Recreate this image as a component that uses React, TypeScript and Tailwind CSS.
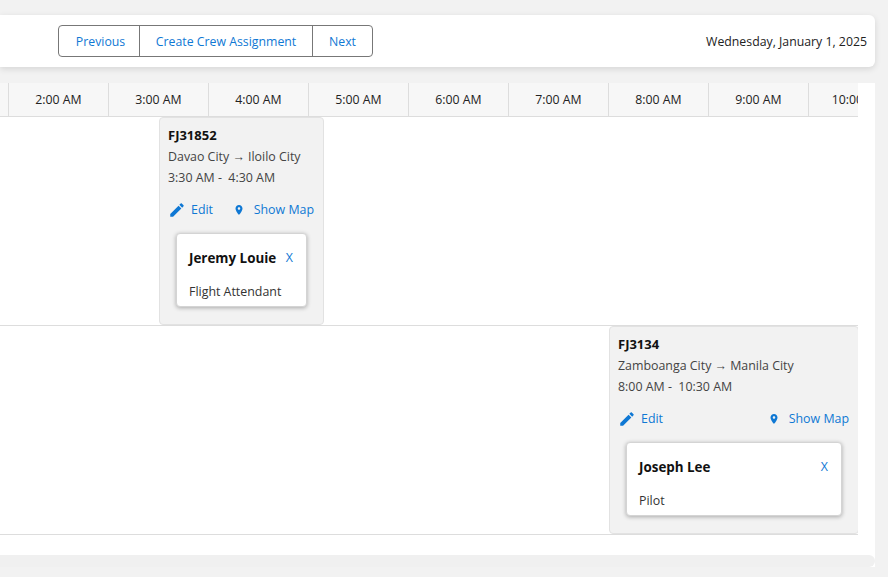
import React from 'react';

const hours = ['1:00 AM', '2:00 AM', '3:00 AM', '4:00 AM', '5:00 AM', '6:00 AM', '7:00 AM', '8:00 AM', '9:00 AM', '10:00 AM'];

type Flight = {
  code: string;
  route: string;
  time: string;
  crew: string;
  role: string;
  position: string;
};

const flights: Flight[] = [
  { code: 'FJ31852', route: 'Davao City → Iloilo City', time: '3:30 AM -  4:30 AM', crew: 'Jeremy Louie', role: 'Flight Attendant', position: 'left-[159px] w-[165px]' },
  { code: 'FJ3134', route: 'Zamboanga City → Manila City', time: '8:00 AM -  10:30 AM', crew: 'Joseph Lee', role: 'Pilot', position: 'left-[609px] w-[250px]' },
];

const EditIcon = () => (
  <svg viewBox="0 0 24 24" className="h-[18px] w-[18px] fill-[#0f78d4]">
    <path d="M3 17.25V21h3.75L17.81 9.94l-3.75-3.75L3 17.25zM20.71 7.04c.39-.39.39-1.02 0-1.41l-2.34-2.34c-.39-.39-1.02-.39-1.41 0l-1.83 1.83 3.75 3.75 1.83-1.83z" />
  </svg>
);

const PinIcon = () => (
  <svg viewBox="0 0 24 24" className="h-3 w-3 fill-[#0f78d4]">
    <path d="M12 2C8.13 2 5 5.13 5 9c0 5.25 7 13 7 13s7-7.75 7-13c0-3.87-3.13-7-7-7zm0 9.5c-1.38 0-2.5-1.12-2.5-2.5s1.12-2.5 2.5-2.5 2.5 1.12 2.5 2.5-1.12 2.5-2.5 2.5z" />
  </svg>
);

const FlightCard = ({ flight }: { flight: Flight }) => (
  <div className={`absolute top-0 h-[208px] rounded border border-[#e2e2e2] bg-[#f2f2f2] pl-2 pr-[9px] pt-[7px] ${flight.position}`}>
    <div className="text-[13px] leading-5 font-bold text-[#111]">{flight.code}</div>
    <div className="mt-[2px] text-[12.4px] leading-5 whitespace-pre text-[#444]">{flight.route}</div>
    <div className="mt-px text-[12.4px] leading-5 whitespace-pre text-[#444]">{flight.time}</div>
    <div className="mt-[12px] flex items-center justify-between text-[12.4px] leading-5 text-[#0f78d4]">
      <div className="flex items-center gap-[5px]">
        <EditIcon />
        <span>Edit</span>
      </div>
      <div className="flex items-center gap-[9px]">
        <PinIcon />
        <span>Show Map</span>
      </div>
    </div>
    <div className="ml-2 mr-[7px] mt-[13px] h-[74px] rounded border border-[#d4d4d4] bg-white pl-3 pr-[13px] pt-[14px] shadow-[0_1px_4px_rgba(0,0,0,0.3)]">
      <div className="flex items-center justify-between leading-5">
        <span className="text-[13.4px] font-bold text-[#111]">{flight.crew}</span>
        <span className="text-[12.4px] text-[#0f78d4]">X</span>
      </div>
      <div className="mt-[14px] text-[12.4px] leading-5 text-[#333]">{flight.role}</div>
    </div>
  </div>
);

export default function App() {
  return (
    <div className="h-[577px] w-[888px] overflow-hidden bg-[#f2f2f2] pt-[15px] font-['Open_Sans',sans-serif]">
      <div className="flex h-[52px] w-[875px] items-center justify-between rounded-r-md bg-white pl-[58px] pr-2 shadow-[0_2px_6px_rgba(0,0,0,0.12)]">
        <div className="flex h-8 rounded border border-[#777] text-[12.3px] text-[#0f78d4]">
          <button className="w-[81px] border-r border-[#777] pl-[3px] pt-[2px]">Previous</button>
          <button className="w-[173px] border-r border-[#777] pt-[2px]">Create Crew Assignment</button>
          <button className="w-[59px] flex-1 pt-[2px]">Next</button>
        </div>
        <span className="pt-[2px] text-[12.3px] text-[#222]">Wednesday, January 1, 2025</span>
      </div>

      <div className="mt-4 h-[484px] w-[875px] bg-white">
        <div className="mr-[17px] overflow-hidden">
          <div className="-ml-[91px] flex h-[34px] border-b border-[#ddd] bg-[#f7f7f7]">
            {hours.map((hour) => (
              <div key={hour} className="flex w-[100px] shrink-0 items-center justify-center border-r border-[#ddd] pt-[2px] text-[12.3px] text-[#222]">
                {hour}
              </div>
            ))}
          </div>
          {flights.map((flight) => (
            <div key={flight.code} className="relative h-[209px] overflow-hidden border-b border-[#ddd]">
              <FlightCard flight={flight} />
            </div>
          ))}
        </div>
        <div className="mt-5 h-3 rounded-r-md bg-[#f0f0f0]" />
      </div>
    </div>
  );
}
